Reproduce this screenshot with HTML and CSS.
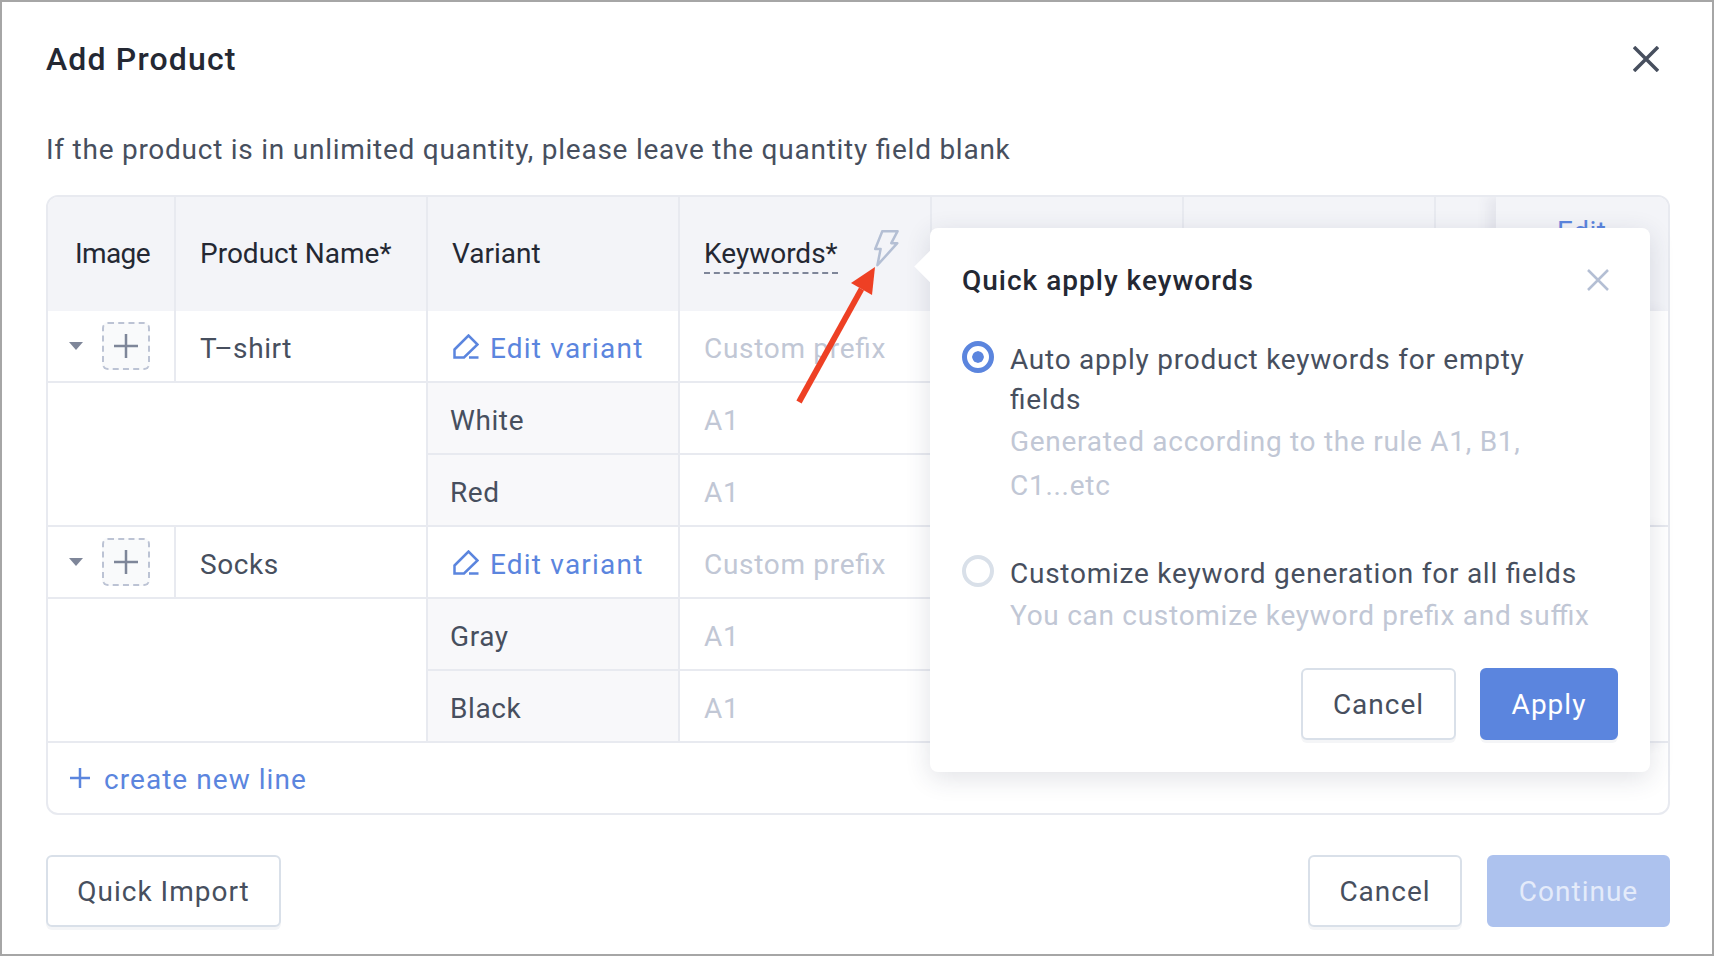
FILE: index.html
```html
<!DOCTYPE html>
<html lang="en">
<head>
<meta charset="utf-8">
<title>Add Product</title>
<link rel="stylesheet" href="styles.css">
</head>
<body>
<div class="dialog">
  <header class="dialog-head">
    <h1 class="dialog-title">Add Product</h1>
    <svg class="close-main" viewBox="0 0 26 26"><path d="M1 1L25 25M25 1L1 25"/></svg>
  </header>
  <p class="note">If the product is in unlimited quantity, please leave the quantity field blank</p>

  <div class="table-wrap">
    <div class="table">
      <div class="th th-image">Image</div>
      <div class="th">Product Name*</div>
      <div class="th">Variant</div>
      <div class="th"><span class="kw-label">Keywords*</span>
        <svg class="bolt" viewBox="0 0 25 37"><path d="M8.3 1.2H23.6L17.3 13.2H23.3L3.4 35.2L6.6 19H1.2Z"/></svg>
      </div>
      <div class="th"></div>
      <div class="th"></div>
      <div class="th th-end"></div>
      <div class="th-fixed">Edit</div>

      <div class="td td-image">
        <span class="caret"></span>
        <span class="add-box"><svg viewBox="0 0 24 24"><path d="M12 0V24M0 12H24"/></svg></span>
      </div>
      <div class="td">T–shirt</div>
      <div class="td td-link">
        <svg class="pen" viewBox="0 0 26 25"><path d="M1.5 15.5L15.5 1.5L24.5 10.5L11 23.5H1.5ZM16 23.5H25.5"/></svg>Edit variant
      </div>
      <div class="td td-ph">Custom prefix</div>
      <div class="td"></div>
      <div class="td"></div>
      <div class="td td-end"></div>
      <div class="td-fixed"></div>

      <div class="td-blank"></div>
      <div class="td td-var">White</div>
      <div class="td td-ph">A1</div>
      <div class="td"></div>
      <div class="td"></div>
      <div class="td td-end"></div>

      <div class="td td-var">Red</div>
      <div class="td td-ph">A1</div>
      <div class="td"></div>
      <div class="td"></div>
      <div class="td td-end"></div>

      <div class="td td-image">
        <span class="caret"></span>
        <span class="add-box"><svg viewBox="0 0 24 24"><path d="M12 0V24M0 12H24"/></svg></span>
      </div>
      <div class="td">Socks</div>
      <div class="td td-link">
        <svg class="pen" viewBox="0 0 26 25"><path d="M1.5 15.5L15.5 1.5L24.5 10.5L11 23.5H1.5ZM16 23.5H25.5"/></svg>Edit variant
      </div>
      <div class="td td-ph">Custom prefix</div>
      <div class="td"></div>
      <div class="td"></div>
      <div class="td td-end"></div>
      <div class="td-fixed"></div>

      <div class="td-blank"></div>
      <div class="td td-var">Gray</div>
      <div class="td td-ph">A1</div>
      <div class="td"></div>
      <div class="td"></div>
      <div class="td td-end"></div>

      <div class="td td-var">Black</div>
      <div class="td td-ph">A1</div>
      <div class="td"></div>
      <div class="td"></div>
      <div class="td td-end"></div>

      <div class="create-line">
        <svg class="create-plus" viewBox="0 0 20 20"><path d="M10 0V20M0 10H20"/></svg>create new line
      </div>
    </div>

    <section class="popover">
      <span class="popover-tip"></span>
      <div class="popover-head">
        <h2 class="popover-title">Quick apply keywords</h2>
        <svg class="close-pop" viewBox="0 0 22 22"><path d="M1 1L21 21M21 1L1 21"/></svg>
      </div>
      <div class="option option-first">
        <span class="radio radio-on"></span>
        <div class="option-text">
          <div class="option-label">Auto apply product keywords for empty<br>fields</div>
          <div class="option-desc">Generated according to the rule A1, B1,<br>C1...etc</div>
        </div>
      </div>
      <div class="option option-second">
        <span class="radio"></span>
        <div class="option-text">
          <div class="option-label">Customize keyword generation for all fields</div>
          <div class="option-desc">You can customize keyword prefix and suffix</div>
        </div>
      </div>
      <div class="popover-foot">
        <button class="btn btn-pop-cancel">Cancel</button>
        <button class="btn btn-apply">Apply</button>
      </div>
    </section>

    <svg class="red-arrow" viewBox="0 0 90 150"><path d="M4.400 142.500L9.600 145.500L72 32.500L67 29.500Z"/><path d="M83 9L59 25L80 37Z"/></svg>
  </div>

  <footer class="dialog-foot">
    <button class="btn btn-import">Quick Import</button>
    <div class="foot-right">
      <button class="btn btn-cancel">Cancel</button>
      <button class="btn btn-continue">Continue</button>
    </div>
  </footer>
</div>
</body>
</html>
```

FILE: styles.css
```css
* { box-sizing: border-box; }
html, body { margin: 0; padding: 0; background: #fff; }
body {
  font-family: Roboto, "Noto Sans", sans-serif;
  font-size: 28px;
  color: #474f5e;
  font-feature-settings: "liga" 1;
}
.dialog {
  width: 1714px;
  height: 956px;
  border: 2px solid #a6a6a6;
  padding: 24px 42px 27px 44px;
  display: flex;
  flex-direction: column;
  overflow: hidden;
}
.dialog-head {
  height: 66px;
  display: flex;
  align-items: center;
  justify-content: space-between;
  padding-right: 11px;
  flex: none;
}
.dialog-title {
  margin: 0;
  font-size: 32px;
  font-weight: 500;
  color: #242833;
  letter-spacing: 1.15px;
}
.close-main { width: 26px; height: 26px; fill: none; stroke: #474f5e; stroke-width: 3.5; }
.note {
  margin: 35px 0 22px;
  line-height: 46px;
  height: 46px;
  flex: none;
  letter-spacing: 0.75px;
}
.table-wrap {
  position: relative;
  flex: none;
  width: 1624px;
  height: 620px;
  border: 2px solid #e8eaf0;
  border-radius: 12px;
}
.table {
  display: grid;
  grid-template-columns: 128px 252px 252px 252px 252px 252px 60px 1fr;
  grid-template-rows: 114px repeat(6, 72px) 70px;
  height: 100%;
  border-radius: 10px;
  overflow: hidden;
}
.th {
  background: #f3f4f8;
  border-right: 2px solid #e8eaf0;
  padding: 0 0 2px 24px;
  display: flex;
  align-items: center;
  color: #242833;
  font-weight: 400;
}
.th-image { padding-left: 27px; letter-spacing: -0.6px; }
.th-end { border-right: 0; }
.th-fixed {
  grid-column: 8;
  background: #f3f4f8;
  color: #5b85de;
  padding: 15px 0 0 61px;
  line-height: 40px;
  letter-spacing: 0.5px;
  box-shadow: -8px 0 12px rgba(60, 70, 100, 0.08);
  z-index: 1;
}
.kw-label {
  border-bottom: 2px dashed #7e8699;
  line-height: 36px;
  margin-top: 4px;
}
.bolt {
  width: 25px;
  height: 37px;
  margin: 0 0 10px 36px;
  fill: none;
  stroke: #b4bfd4;
  stroke-width: 2.5;
  stroke-linejoin: round;
}
.td {
  border-right: 2px solid #e8eaf0;
  border-bottom: 2px solid #e8eaf0;
  padding: 4px 0 0 24px;
  display: flex;
  align-items: center;
  letter-spacing: 0.6px;
}
.td-end { border-right: 0; }
.td-image { padding: 0 0 0 21px; }
.td-link { color: #5b85de; letter-spacing: 1.2px; }
.td-ph { color: #c1c7d5; letter-spacing: 0.7px; }
.td-var { background: #f8f8fa; padding-left: 22px; }
.td-blank {
  grid-column: 1 / span 2;
  grid-row: span 2;
  border-right: 2px solid #e8eaf0;
  border-bottom: 2px solid #e8eaf0;
}
.td-fixed {
  grid-column: 8;
  grid-row: span 3;
  border-bottom: 2px solid #e8eaf0;
  background: #fff;
  box-shadow: -8px 0 12px rgba(60, 70, 100, 0.08);
  z-index: 1;
}
.caret {
  width: 0;
  height: 0;
  border-left: 7px solid transparent;
  border-right: 7px solid transparent;
  border-top: 8px solid #7e8699;
  margin-right: 19px;
}
.add-box {
  width: 48px;
  height: 48px;
  border: 2px dashed #bcc3d4;
  border-radius: 6px;
  background: #f9fafb;
  display: flex;
  align-items: center;
  justify-content: center;
}
.add-box svg { width: 24px; height: 24px; fill: none; stroke: #7e8699; stroke-width: 2.5; }
.pen {
  width: 26px;
  height: 25px;
  margin: 0 11px 4px 1px;
  fill: none;
  stroke: #5b85de;
  stroke-width: 2.5;
  flex: none;
}
.create-line {
  grid-column: 1 / -1;
  display: flex;
  align-items: center;
  padding: 2px 0 0 22px;
  color: #5b85de;
  letter-spacing: 1.05px;
}
.create-plus {
  width: 20px;
  height: 20px;
  margin: 0 14px 2px 0;
  fill: none;
  stroke: #5b85de;
  stroke-width: 2.5;
}
.popover {
  position: absolute;
  left: 882px;
  top: 31px;
  width: 720px;
  height: 544px;
  background: #fff;
  border-radius: 8px;
  box-shadow: 0 6px 26px rgba(40, 50, 80, 0.14);
  padding: 30px 32px 32px;
  z-index: 2;
  display: flex;
  flex-direction: column;
}
.popover-tip {
  position: absolute;
  left: -11px;
  top: 27px;
  width: 23px;
  height: 23px;
  background: #fff;
  transform: rotate(45deg);
}
.popover-head {
  height: 44px;
  display: flex;
  align-items: center;
  justify-content: space-between;
  padding-right: 9px;
  flex: none;
}
.popover-title {
  margin: 0;
  font-size: 28px;
  font-weight: 500;
  color: #242833;
  letter-spacing: 1px;
}
.close-pop { width: 22px; height: 22px; fill: none; stroke: #b4bfd4; stroke-width: 2.5; }
.option { display: flex; gap: 16px; flex: none; }
.option-first { margin-top: 38px; }
.option-second { margin-top: 46px; }
.radio {
  width: 32px;
  height: 32px;
  border-radius: 50%;
  border: 4px solid #d9e0e9;
  background: #fff;
  flex: none;
  margin-top: 1px;
  display: block;
}
.radio-on {
  border: 5px solid #5b85de;
  padding: 5px;
  background: #5b85de content-box;
  box-shadow: inset 0 0 0 5px #fff;
}
.option-label { line-height: 40px; letter-spacing: 0.75px; }
.option-desc { line-height: 44px; color: #c1c7d5; letter-spacing: 0.72px; }
.popover-foot {
  display: flex;
  justify-content: flex-end;
  gap: 24px;
  margin-top: auto;
}
.btn {
  height: 72px;
  border-radius: 6px;
  font-family: inherit;
  font-size: 28px;
  font-feature-settings: inherit;
  letter-spacing: 1px;
  border: 2px solid #d9e0e9;
  background: #fff;
  color: #474f5e;
  padding: 0;
  box-shadow: 0 3px 0 #f4f5f7;
}
.btn-pop-cancel { width: 155px; }
.btn-apply { width: 138px; background: #5b85de; border-color: #5b85de; color: #fff; }
.btn-import { width: 235px; }
.btn-cancel { width: 154px; }
.btn-continue {
  width: 183px;
  background: #adc2ee;
  border-color: #adc2ee;
  color: #e4ebfa;
  box-shadow: none;
}
.dialog-foot {
  display: flex;
  justify-content: space-between;
  margin-top: 40px;
  flex: none;
}
.foot-right { display: flex; gap: 25px; }
.red-arrow {
  position: absolute;
  left: 744px;
  top: 61px;
  width: 90px;
  height: 150px;
  z-index: 3;
  fill: #ee4024;
}
```
